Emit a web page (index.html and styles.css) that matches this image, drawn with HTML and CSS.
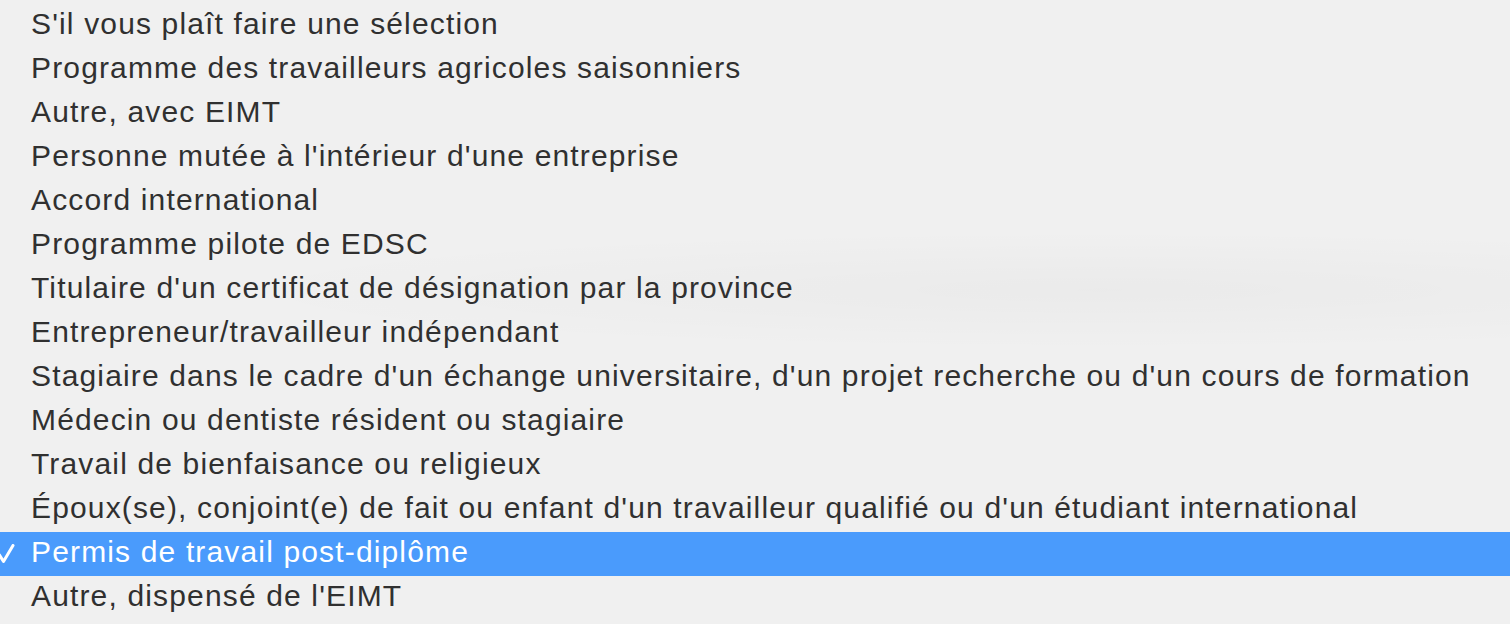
FILE: index.html
```html
<!DOCTYPE html>
<html lang="fr">
<head>
<meta charset="utf-8">
<link rel="stylesheet" href="styles.css">
</head>
<body>
<ul class="menu">
  <li class="item"><span class="check"></span><span class="label">S'il vous plaît faire une sélection</span></li>
  <li class="item"><span class="check"></span><span class="label">Programme des travailleurs agricoles saisonniers</span></li>
  <li class="item"><span class="check"></span><span class="label">Autre, avec EIMT</span></li>
  <li class="item"><span class="check"></span><span class="label">Personne mutée à l'intérieur d'une entreprise</span></li>
  <li class="item"><span class="check"></span><span class="label">Accord international</span></li>
  <li class="item"><span class="check"></span><span class="label">Programme pilote de EDSC</span></li>
  <li class="item"><span class="check"></span><span class="label">Titulaire d'un certificat de désignation par la province</span></li>
  <li class="item"><span class="check"></span><span class="label">Entrepreneur/travailleur indépendant</span></li>
  <li class="item"><span class="check"></span><span class="label">Stagiaire dans le cadre d'un échange universitaire, d'un projet recherche ou d'un cours de formation</span></li>
  <li class="item"><span class="check"></span><span class="label">Médecin ou dentiste résident ou stagiaire</span></li>
  <li class="item"><span class="check"></span><span class="label">Travail de bienfaisance ou religieux</span></li>
  <li class="item"><span class="check"></span><span class="label">Époux(se), conjoint(e) de fait ou enfant d'un travailleur qualifié ou d'un étudiant international</span></li>
  <li class="item selected"><span class="check"><svg class="tick" width="17" height="20" viewBox="0 0 17 20"><path d="M1.5 11 L5.5 17.5 L15 1.5" fill="none" stroke="#ffffff" stroke-width="3" stroke-linecap="round" stroke-linejoin="round"/></svg></span><span class="label">Permis de travail post-diplôme</span></li>
  <li class="item"><span class="check"></span><span class="label">Autre, dispensé de l'EIMT</span></li>
</ul>
</body>
</html>
```
FILE: styles.css
```css
html, body {
  margin: 0;
  padding: 0;
}
body {
  width: 1510px;
  height: 624px;
  overflow: hidden;
  background: #f0f0f0;
  background-image: radial-gradient(ellipse 900px 60px at 1100px 290px, rgba(0,0,0,0.025), rgba(0,0,0,0));
  font-family: "Liberation Sans", Arial, sans-serif;
}
.menu {
  list-style: none;
  margin: 0;
  padding: 4px 0;
}
.item {
  display: flex;
  align-items: center;
  box-sizing: border-box;
  height: 44px;
  padding-bottom: 5px;
  color: #303030;
  font-size: 30px;
  letter-spacing: 1.15px;
  white-space: nowrap;
}
.check {
  width: 31px;
  flex: none;
  display: flex;
  align-items: center;
  margin-left: -2px;
  margin-right: 2px;
  padding-top: 4px;
}
.tick {
  display: block;
}
.selected {
  background: #4a9bfc;
  color: #ffffff;
}
```
